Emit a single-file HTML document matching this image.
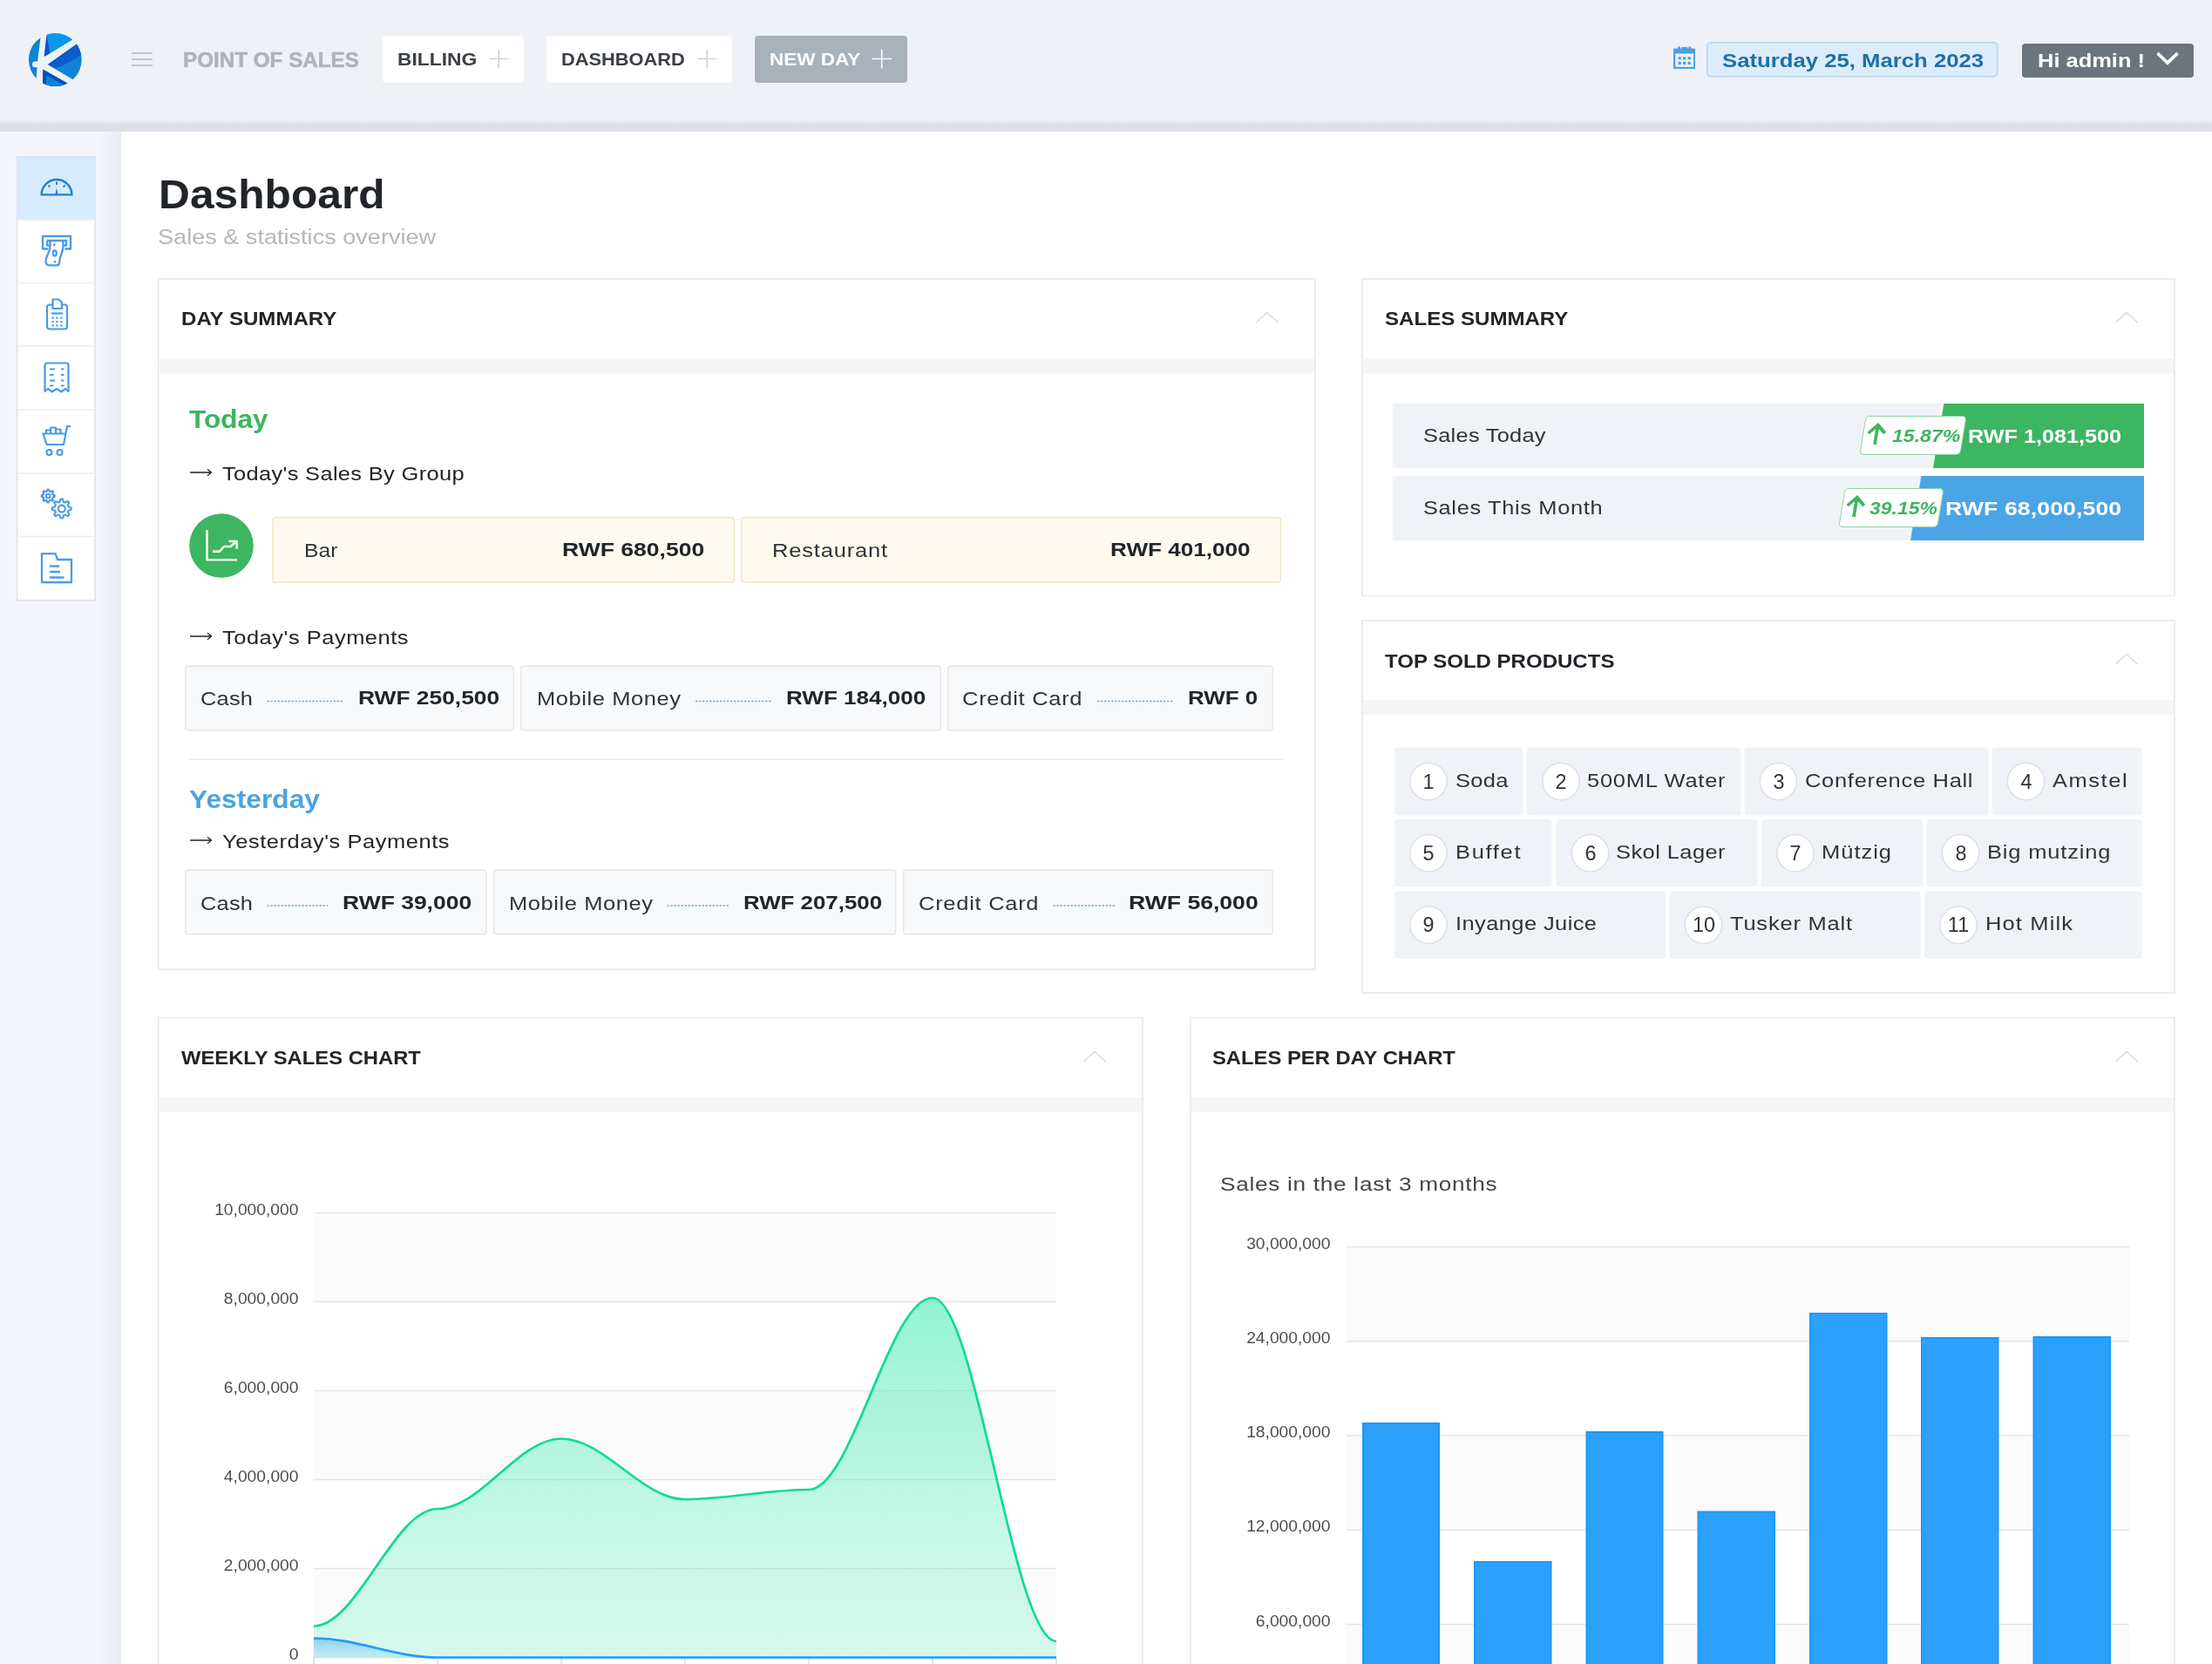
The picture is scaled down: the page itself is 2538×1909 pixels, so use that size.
<!DOCTYPE html><html lang="en"><head><meta charset="utf-8"><title>Dashboard</title><style>html,body{margin:0;padding:0}
body{width:2538px;height:1909px;overflow:hidden;background:#fff;position:relative;font-family:"Liberation Sans", sans-serif}
body>div,body>svg,body>span{position:absolute;display:block}
.t{white-space:nowrap;line-height:1;will-change:transform}
</style></head><body><div style="left:0;top:0;width:2538px;height:142px;background:#eef1f6"></div><div style="left:0;top:137px;width:2538px;height:14px;background:linear-gradient(#eef1f6 0,#e8ebf0 3px,#dcdfe5 5.5px,#dcdfe5 100%)"></div><div style="left:0;top:151px;width:139px;height:1758px;background:linear-gradient(90deg,#f3f5fa 0,#f3f5fa 110px,#e9ecf2 139px)"></div><svg style="left:0;top:0" width="2538" height="1909" viewBox="0 0 2538 1909"><line x1="151" x2="175" y1="61.0" y2="61.0" stroke="#adb3bc" stroke-width="1.4"/><line x1="151" x2="175" y1="68.0" y2="68.0" stroke="#adb3bc" stroke-width="1.4"/><line x1="151" x2="175" y1="75.0" y2="75.0" stroke="#adb3bc" stroke-width="1.4"/><rect x="439.00" y="41.00" width="162.00" height="54.00" rx="4" fill="#fff"/><path d="M561 67.5 H583.5 M572.25 56.5 V78.5" stroke="#ccd0d4" stroke-width="1.6" fill="none"/><rect x="627.00" y="41.00" width="213.00" height="54.00" rx="4" fill="#fff"/><path d="M800 67.5 H822.5 M811.25 56.5 V78.5" stroke="#ccd0d4" stroke-width="1.6" fill="none"/><rect x="866.00" y="41.00" width="175.00" height="54.00" rx="4" fill="#a9b1ba"/><path d="M1000.5 67.5 H1023 M1011.75 56.5 V78.5" stroke="#fff" stroke-width="1.6" fill="none"/><rect x="1958.80" y="48.80" width="332.90" height="38.90" rx="4" fill="#dcecfa" stroke="#b3d6f3" stroke-width="1.6"/><rect x="2320.00" y="50.00" width="197.00" height="39.00" rx="4" fill="#6c757d"/><rect x="19.80" y="179.80" width="89.40" height="508.90" rx="0" fill="#fff" stroke="#e0e3e9" stroke-width="1.6"/><rect x="19.80" y="179.80" width="89.40" height="72.60" rx="0" fill="#d6ebfc"/><rect x="20.60" y="251.60" width="87.80" height="1.60" rx="0" fill="#eceff3"/><rect x="20.60" y="323.70" width="87.80" height="1.60" rx="0" fill="#eceff3"/><rect x="20.60" y="396.20" width="87.80" height="1.60" rx="0" fill="#eceff3"/><rect x="20.60" y="469.20" width="87.80" height="1.60" rx="0" fill="#eceff3"/><rect x="20.60" y="542.20" width="87.80" height="1.60" rx="0" fill="#eceff3"/><rect x="20.60" y="614.70" width="87.80" height="1.60" rx="0" fill="#eceff3"/><rect x="181.70" y="320.00" width="1327.20" height="792.00" rx="0" fill="#fff" stroke="#e6e8ec" stroke-width="1.6"/><rect x="182.50" y="411.20" width="1325.60" height="17.00" rx="0" fill="#f4f5f7"/><rect x="1562.80" y="320.00" width="932.20" height="363.60" rx="0" fill="#fff" stroke="#e6e8ec" stroke-width="1.6"/><rect x="1563.60" y="411.20" width="930.60" height="17.00" rx="0" fill="#f4f5f7"/><rect x="1562.80" y="712.10" width="932.20" height="426.90" rx="0" fill="#fff" stroke="#e6e8ec" stroke-width="1.6"/><rect x="1563.60" y="803.30" width="930.60" height="17.00" rx="0" fill="#f4f5f7"/><rect x="181.70" y="1167.50" width="1129.30" height="781.70" rx="0" fill="#fff" stroke="#e6e8ec" stroke-width="1.6"/><rect x="182.50" y="1258.70" width="1127.70" height="17.00" rx="0" fill="#f4f5f7"/><rect x="1366.10" y="1167.50" width="1128.90" height="781.70" rx="0" fill="#fff" stroke="#e6e8ec" stroke-width="1.6"/><rect x="1366.90" y="1258.70" width="1127.30" height="17.00" rx="0" fill="#f4f5f7"/><rect x="313.00" y="593.70" width="529.30" height="74.30" rx="3" fill="#fefaf0" stroke="#efe6c0" stroke-width="1.4"/><rect x="850.70" y="593.70" width="618.60" height="74.30" rx="3" fill="#fefaf0" stroke="#efe6c0" stroke-width="1.4"/><rect x="212.70" y="764.20" width="376.60" height="73.60" rx="3" fill="#f8f9fb" stroke="#e4e6ea" stroke-width="1.4"/><line x1="306.5" x2="394.5" y1="804.5" y2="804.5" stroke="#62b1d8" stroke-width="1.5" stroke-dasharray="2.4 1.6"/><rect x="597.70" y="764.20" width="481.60" height="73.60" rx="3" fill="#f8f9fb" stroke="#e4e6ea" stroke-width="1.4"/><line x1="798" x2="885" y1="804.5" y2="804.5" stroke="#62b1d8" stroke-width="1.5" stroke-dasharray="2.4 1.6"/><rect x="1087.70" y="764.20" width="372.60" height="73.60" rx="3" fill="#f8f9fb" stroke="#e4e6ea" stroke-width="1.4"/><line x1="1259" x2="1347" y1="804.5" y2="804.5" stroke="#62b1d8" stroke-width="1.5" stroke-dasharray="2.4 1.6"/><rect x="217.00" y="870.40" width="1256.00" height="1.60" rx="0" fill="#e9ebee"/><rect x="212.70" y="998.20" width="345.10" height="73.60" rx="3" fill="#f8f9fb" stroke="#e4e6ea" stroke-width="1.4"/><line x1="306.5" x2="376" y1="1039.0" y2="1039.0" stroke="#62b1d8" stroke-width="1.5" stroke-dasharray="2.4 1.6"/><rect x="566.70" y="998.20" width="461.10" height="73.60" rx="3" fill="#f8f9fb" stroke="#e4e6ea" stroke-width="1.4"/><line x1="765.5" x2="836" y1="1039.0" y2="1039.0" stroke="#62b1d8" stroke-width="1.5" stroke-dasharray="2.4 1.6"/><rect x="1036.70" y="998.20" width="423.60" height="73.60" rx="3" fill="#f8f9fb" stroke="#e4e6ea" stroke-width="1.4"/><line x1="1208.5" x2="1279.5" y1="1039.0" y2="1039.0" stroke="#62b1d8" stroke-width="1.5" stroke-dasharray="2.4 1.6"/><rect x="1598.00" y="463.00" width="862.00" height="74.00" rx="0" fill="#eff3f7"/><rect x="1598.00" y="546.00" width="862.00" height="74.00" rx="0" fill="#eff3f7"/><rect x="1600.00" y="857.50" width="147.50" height="78.00" rx="4" fill="#eff3f7"/><circle cx="1639" cy="896.5" r="21.2" fill="#fff" stroke="#dde1e6" stroke-width="1.6"/><rect x="1752.00" y="857.50" width="245.50" height="78.00" rx="4" fill="#eff3f7"/><circle cx="1791" cy="896.5" r="21.2" fill="#fff" stroke="#dde1e6" stroke-width="1.6"/><rect x="2001.50" y="857.50" width="280.00" height="78.00" rx="4" fill="#eff3f7"/><circle cx="2040.5" cy="896.5" r="21.2" fill="#fff" stroke="#dde1e6" stroke-width="1.6"/><rect x="2285.50" y="857.50" width="172.00" height="78.00" rx="4" fill="#eff3f7"/><circle cx="2324.5" cy="896.5" r="21.2" fill="#fff" stroke="#dde1e6" stroke-width="1.6"/><rect x="1600.00" y="940.00" width="180.50" height="77.50" rx="4" fill="#eff3f7"/><circle cx="1639" cy="978.75" r="21.2" fill="#fff" stroke="#dde1e6" stroke-width="1.6"/><rect x="1785.50" y="940.00" width="231.00" height="77.50" rx="4" fill="#eff3f7"/><circle cx="1824.5" cy="978.75" r="21.2" fill="#fff" stroke="#dde1e6" stroke-width="1.6"/><rect x="2021.00" y="940.00" width="185.50" height="77.50" rx="4" fill="#eff3f7"/><circle cx="2060" cy="978.75" r="21.2" fill="#fff" stroke="#dde1e6" stroke-width="1.6"/><rect x="2210.50" y="940.00" width="247.00" height="77.50" rx="4" fill="#eff3f7"/><circle cx="2249.5" cy="978.75" r="21.2" fill="#fff" stroke="#dde1e6" stroke-width="1.6"/><rect x="1600.00" y="1022.50" width="311.50" height="77.50" rx="4" fill="#eff3f7"/><circle cx="1639" cy="1061.25" r="21.2" fill="#fff" stroke="#dde1e6" stroke-width="1.6"/><rect x="1915.50" y="1022.50" width="288.00" height="77.50" rx="4" fill="#eff3f7"/><circle cx="1954.5" cy="1061.25" r="21.2" fill="#fff" stroke="#dde1e6" stroke-width="1.6"/><rect x="2208.00" y="1022.50" width="249.50" height="77.50" rx="4" fill="#eff3f7"/><circle cx="2247" cy="1061.25" r="21.2" fill="#fff" stroke="#dde1e6" stroke-width="1.6"/></svg><svg style="left:32px;top:37px" width="63" height="63" viewBox="0 0 63 63">
<defs><clipPath id="lc"><circle cx="31.3" cy="31.6" r="30.4"/></clipPath>
<linearGradient id="lg1" x1="0" y1="0" x2="1" y2="1"><stop offset="0" stop-color="#0a4cc4"/><stop offset="1" stop-color="#0b68d2"/></linearGradient></defs>
<g clip-path="url(#lc)">
<rect width="63" height="63" fill="#0d84d8"/>
<path d="M18 0 H56 L60 3.2 L19.9 27.5 Z" fill="#0a97e8"/>
<path d="M21.8 4 L25.5 24.5 L18 30 L20 10 Z" fill="#0a55cc"/>
<path d="M22.6 36.9 L60 10.5 L63 14 L63 24.5 C54 31.5 43 37.5 31.8 41.3 Z" fill="url(#lg1)"/>
<path d="M17.5 42.6 L52 62.1 L40 66 L12 66 Z" fill="#0a4ec4"/>
<path d="M21.5 49.5 L20.3 64 L44 64 L42 61.1 Z" fill="#0d82d6"/>
</g>
<path d="M15.3 0 L14.9 3 L11.3 31.7 L9.2 58 L8.9 63 L16.9 64 L16.9 60 L17.1 42.5 L18.2 30.5 L21.5 2 L21.8 -1 Z" fill="#eef1f6"/>
<path d="M19.9 27.5 L60 3.2 L60 10.5 L22.6 36.9 L58 58 L52 62.1 L17.5 42.6 L13.5 43 L14.5 28 Z" fill="#eef1f6"/>
<path d="M8.3 36.8 H16" stroke="#eef1f6" stroke-width="6.8" stroke-linecap="round" fill="none"/>
</svg><span class="t" id="t0" style="top:57.53px;font-size:23px;font-weight:700;color:#adb3bb;letter-spacing:0.000px;left:209.79px;transform:scaleX(1.0534);transform-origin:0 0;-webkit-text-stroke:0.5px #adb3bb;">POINT OF SALES</span><span class="t" id="t1" style="top:57.76px;font-size:20.6px;font-weight:700;color:#3b4046;letter-spacing:0.000px;left:455.86px;transform:scaleX(1.1081);transform-origin:0 0;">BILLING</span><span class="t" id="t2" style="top:57.76px;font-size:20.6px;font-weight:700;color:#3b4046;letter-spacing:0.000px;left:643.91px;transform:scaleX(1.0584);transform-origin:0 0;">DASHBOARD</span><span class="t" id="t3" style="top:57.76px;font-size:20.6px;font-weight:700;color:#fff;letter-spacing:0.000px;left:882.87px;transform:scaleX(1.0933);transform-origin:0 0;">NEW DAY</span><svg style="left:1919.5px;top:53px" width="25.4" height="26.3" viewBox="0 0 27 28">
<rect x="1.2" y="4" width="24.6" height="22.6" fill="none" stroke="#4a9fe3" stroke-width="2.4"/>
<rect x="1.2" y="4" width="24.6" height="5" fill="#4a9fe3"/>
<rect x="5.5" y="0.5" width="3" height="6" fill="#4a9fe3"/><rect x="18.5" y="0.5" width="3" height="6" fill="#4a9fe3"/>
<rect x="10" y="1" width="7" height="2.4" fill="#4a9fe3"/>
<g fill="#4a9fe3"><rect x="6" y="13" width="3.4" height="3.4"/><rect x="11.8" y="13" width="3.4" height="3.4"/><rect x="17.6" y="13" width="3.4" height="3.4"/>
<rect x="6" y="19" width="3.4" height="3.4"/><rect x="11.8" y="19" width="3.4" height="3.4"/><rect x="17.6" y="19" width="3.4" height="3.4"/></g>
</svg><span class="t" id="t4" style="top:57.82px;font-size:22.9px;font-weight:700;color:#1f6fa8;letter-spacing:0.000px;left:1975.71px;transform:scaleX(1.1230);transform-origin:0 0;">Saturday 25, March 2023</span><span class="t" id="t5" style="top:58.81px;font-size:22.2px;font-weight:700;color:#fff;letter-spacing:0.000px;left:2337.73px;transform:scaleX(1.1473);transform-origin:0 0;">Hi admin !</span><svg style="left:2472px;top:57px" width="30" height="20" viewBox="0 0 30 20"><path d="M3.5 4 L15 15 L26.5 4" fill="none" stroke="#fff" stroke-width="3.8"/></svg><svg style="left:45px;top:201px" width="40" height="25" viewBox="0 0 40 25">
<path d="M2.6 22.4 A17.4 17.4 0 0 1 37.4 22.4 Z" fill="none" stroke="#2180d3" stroke-width="2.4" stroke-linejoin="round"/>
<path d="M18.4 22 L20 14.5 L21.6 22 Z" fill="#2180d3"/>
<path d="M20 7.5 V11 M10.5 11.5 L12.3 13.6 M29.5 11.5 L27.7 13.6" stroke="#2180d3" stroke-width="2" fill="none"/>
</svg><svg style="left:46px;top:268px" width="38" height="39" viewBox="0 0 38 39">
<g fill="none" stroke="#4a9be6" stroke-width="2.3" stroke-linejoin="round">
<path d="M9 17.5 H3 V3 H35 V17.5 H28.5"/>
<path d="M8 8 H30 V13.5 H27 M11 13.5 H8 V8"/>
<path d="M11.5 8.5 V14 C11.5 22 6.5 25 6.5 32 C6.5 35 8 36.3 10.5 36.3 H19 C21.5 36.3 22.2 35 22.2 32.5 C22.2 25 26.5 22 26.5 14 V8.5"/>
<ellipse cx="16.8" cy="22.5" rx="2" ry="3"/>
<path d="M16.3 11.5 V14 M17 31 V33.5"/>
</g></svg><svg style="left:52px;top:341px" width="27" height="39" viewBox="0 0 27 39">
<g fill="none" stroke="#4a9be6" stroke-width="2.2" stroke-linejoin="round">
<path d="M8.5 8.5 H5 C3.2 8.5 2 9.7 2 11.5 V33.5 C2 35.3 3.2 36.5 5 36.5 H22 C23.8 36.5 25 35.3 25 33.5 V11.5 C25 9.7 23.8 8.5 22 8.5 H19"/>
<path d="M8.5 13 V2.5 H15.5 L19 6 V13 Z"/>
<path d="M7 18.5 H20"/>
</g>
<g fill="#4a9be6"><rect x="7.5" y="22.6" width="2.2" height="2.2"/><rect x="12.4" y="22.6" width="2.2" height="2.2"/><rect x="17.3" y="22.6" width="2.2" height="2.2"/>
<rect x="7.5" y="27" width="2.2" height="2.2"/><rect x="12.4" y="27" width="2.2" height="2.2"/><rect x="17.3" y="27" width="2.2" height="2.2"/>
<rect x="7.5" y="31.4" width="2.2" height="2.2"/><rect x="12.4" y="31.4" width="2.2" height="2.2"/><rect x="17.3" y="31.4" width="2.2" height="2.2"/></g>
</svg><svg style="left:49px;top:414px" width="32" height="39" viewBox="0 0 32 39">
<g fill="none" stroke="#4a9be6" stroke-width="2.2" stroke-linejoin="round">
<path d="M2.5 35 V5 C2.5 3.5 3.5 2.5 5 2.5 H27 C28.5 2.5 29.5 3.5 29.5 5 V35 L26 32 L21.3 35.5 L16 32 L10.7 35.5 L6 32 Z"/>
<path d="M8 9.5 H14 M21 9.5 H24.5 M8 16 H12.5 M21 16 H24.5 M8 22.5 H14 M21 22.5 H24.5 M8 28.5 H12.5 M21 28.5 H24.5"/>
</g></svg><svg style="left:47px;top:486px" width="36" height="39" viewBox="0 0 36 39">
<g fill="none" stroke="#4a9be6" stroke-width="2.2" stroke-linejoin="round">
<path d="M34 3 H30 L26 24 H6.5 L2.5 11.5 H28"/>
<path d="M6 11 V7.5 H11 V11 M11 11 V4.5 H17 V11 M17 11 V6.5 H22.5 V11"/>
<circle cx="9.5" cy="33" r="3"/><circle cx="21.5" cy="33" r="3"/>
</g></svg><svg style="left:45px;top:559px" width="40" height="39" viewBox="0 0 40 39">
<g fill="none" stroke="#4a9be6" stroke-width="2.1" stroke-linejoin="round">
<path d="M17.75 9.17 L17.75 10.83 L15.48 11.53 L15.02 12.65 L16.13 14.75 L14.95 15.93 L12.85 14.82 L11.73 15.28 L11.03 17.55 L9.37 17.55 L8.67 15.28 L7.55 14.82 L5.45 15.93 L4.27 14.75 L5.38 12.65 L4.92 11.53 L2.65 10.83 L2.65 9.17 L4.92 8.47 L5.38 7.35 L4.27 5.25 L5.45 4.07 L7.55 5.18 L8.67 4.72 L9.37 2.45 L11.03 2.45 L11.73 4.72 L12.85 5.18 L14.95 4.07 L16.13 5.25 L15.02 7.35 L15.48 8.47 Z"/><circle cx="10.2" cy="10" r="2.3"/>
<path d="M36.73 23.39 L36.73 25.81 L33.48 26.83 L32.81 28.45 L34.38 31.48 L32.68 33.18 L29.65 31.61 L28.03 32.28 L27.01 35.53 L24.59 35.53 L23.57 32.28 L21.95 31.61 L18.92 33.18 L17.22 31.48 L18.79 28.45 L18.12 26.83 L14.87 25.81 L14.87 23.39 L18.12 22.37 L18.79 20.75 L17.22 17.72 L18.92 16.02 L21.95 17.59 L23.57 16.92 L24.59 13.67 L27.01 13.67 L28.03 16.92 L29.65 17.59 L32.68 16.02 L34.38 17.72 L32.81 20.75 L33.48 22.37 Z"/><circle cx="25.8" cy="24.6" r="4"/>
</g></svg><svg style="left:45px;top:632px" width="40" height="39" viewBox="0 0 40 39">
<g fill="none" stroke="#4a9be6" stroke-width="2.3" stroke-linejoin="round">
<path d="M3 36 V3.2 H18.5 L21 10 H37 V36 Z"/>
<path d="M12 17.5 H23 M12 24 H24 M12 30.5 H28.5"/>
</g></svg><span class="t" id="t6" style="top:200.57px;font-size:45.4px;font-weight:700;color:#212529;letter-spacing:0.000px;left:181.81px;transform:scaleX(1.0952);transform-origin:0 0;">Dashboard</span><span class="t" id="t7" style="top:259.58px;font-size:24.6px;font-weight:400;color:#b2b7be;letter-spacing:0.000px;left:181.25px;transform:scaleX(1.1013);transform-origin:0 0;">Sales &amp; statistics overview</span><span class="t" id="t8" style="top:355.45px;font-size:22.5px;font-weight:700;color:#212529;letter-spacing:0.000px;left:208.30px;transform:scaleX(1.0702);transform-origin:0 0;">DAY SUMMARY</span><svg style="left:1439.7px;top:356.2px" width="28" height="16" viewBox="0 0 28 16"><path d="M1.5 14 L14 2.5 L26.5 14" fill="none" stroke="#d9dcdf" stroke-width="1.6"/></svg><span class="t" id="t9" style="top:355.45px;font-size:22.5px;font-weight:700;color:#212529;letter-spacing:0.000px;left:1589.30px;transform:scaleX(1.0698);transform-origin:0 0;">SALES SUMMARY</span><svg style="left:2425.8px;top:356.2px" width="28" height="16" viewBox="0 0 28 16"><path d="M1.5 14 L14 2.5 L26.5 14" fill="none" stroke="#d9dcdf" stroke-width="1.6"/></svg><span class="t" id="t10" style="top:747.55px;font-size:22.5px;font-weight:700;color:#212529;letter-spacing:0.000px;left:1589.30px;transform:scaleX(1.0677);transform-origin:0 0;">TOP SOLD PRODUCTS</span><svg style="left:2425.8px;top:748.3px" width="28" height="16" viewBox="0 0 28 16"><path d="M1.5 14 L14 2.5 L26.5 14" fill="none" stroke="#d9dcdf" stroke-width="1.6"/></svg><span class="t" id="t11" style="top:1202.95px;font-size:22.5px;font-weight:700;color:#212529;letter-spacing:0.000px;left:208.31px;transform:scaleX(1.0570);transform-origin:0 0;">WEEKLY SALES CHART</span><svg style="left:1241.8px;top:1203.7px" width="28" height="16" viewBox="0 0 28 16"><path d="M1.5 14 L14 2.5 L26.5 14" fill="none" stroke="#d9dcdf" stroke-width="1.6"/></svg><span class="t" id="t12" style="top:1202.95px;font-size:22.5px;font-weight:700;color:#212529;letter-spacing:0.000px;left:1391.31px;transform:scaleX(1.0571);transform-origin:0 0;">SALES PER DAY CHART</span><svg style="left:2425.8px;top:1203.7px" width="28" height="16" viewBox="0 0 28 16"><path d="M1.5 14 L14 2.5 L26.5 14" fill="none" stroke="#d9dcdf" stroke-width="1.6"/></svg><span class="t" id="t13" style="top:466.62px;font-size:28.8px;font-weight:700;color:#3cb55f;letter-spacing:0.000px;left:216.62px;transform:scaleX(1.0941);transform-origin:0 0;">Today</span><svg style="left:217.5px;top:535.6px" width="26.0" height="12" viewBox="0 0 26.0 12"><path d="M0 6 H24.5 M20.0 2.3 L24.5 6 L20.0 9.7" fill="none" stroke="#212529" stroke-width="1.3"/></svg><span class="t" id="t14" style="top:532.72px;font-size:21.6px;font-weight:400;color:#212529;letter-spacing:0.259px;left:255.23px;transform:scaleX(1.1800);transform-origin:0 0;">Today's Sales By Group</span><svg style="left:217px;top:589px" width="74" height="74" viewBox="0 0 74 74">
<circle cx="37" cy="37" r="36.8" fill="#3cb661"/>
<path d="M20.5 19 V53.2 H55" fill="none" stroke="#fffbea" stroke-width="2.6" stroke-linejoin="round"/>
<path d="M27 43.6 H35 L40 38 H47.5 L54 32.5" fill="none" stroke="#fffbea" stroke-width="2.6" stroke-linejoin="round"/>
<path d="M45.5 32 H54.6 V40.5" fill="none" stroke="#fffbea" stroke-width="2.6"/>
</svg><span class="t" id="t15" style="top:620.92px;font-size:21.6px;font-weight:400;color:#2f3439;letter-spacing:0.000px;left:349.26px;transform:scaleX(1.1447);transform-origin:0 0;">Bar</span><span class="t" id="t16" style="top:620.27px;font-size:22.6px;font-weight:700;color:#212529;letter-spacing:0.000px;left:644.67px;transform:scaleX(1.1739);transform-origin:0 0;">RWF 680,500</span><span class="t" id="t17" style="top:620.92px;font-size:21.6px;font-weight:400;color:#2f3439;letter-spacing:0.696px;left:885.73px;transform:scaleX(1.1800);transform-origin:0 0;">Restaurant</span><span class="t" id="t18" style="top:620.27px;font-size:22.6px;font-weight:700;color:#212529;letter-spacing:0.000px;left:1274.19px;transform:scaleX(1.1556);transform-origin:0 0;">RWF 401,000</span><svg style="left:217.5px;top:723.8px" width="26.0" height="12" viewBox="0 0 26.0 12"><path d="M0 6 H24.5 M20.0 2.3 L24.5 6 L20.0 9.7" fill="none" stroke="#212529" stroke-width="1.3"/></svg><span class="t" id="t19" style="top:720.92px;font-size:21.6px;font-weight:400;color:#212529;letter-spacing:0.427px;left:255.23px;transform:scaleX(1.1800);transform-origin:0 0;">Today's Payments</span><span class="t" id="t20" style="top:791.12px;font-size:21.6px;font-weight:400;color:#2f3439;letter-spacing:0.156px;left:229.73px;transform:scaleX(1.1800);transform-origin:0 0;">Cash</span><span class="t" id="t21" style="top:790.47px;font-size:22.6px;font-weight:700;color:#212529;letter-spacing:0.000px;left:410.68px;transform:scaleX(1.1666);transform-origin:0 0;">RWF 250,500</span><span class="t" id="t22" style="top:791.12px;font-size:21.6px;font-weight:400;color:#2f3439;letter-spacing:0.494px;left:615.73px;transform:scaleX(1.1800);transform-origin:0 0;">Mobile Money</span><span class="t" id="t23" style="top:790.47px;font-size:22.6px;font-weight:700;color:#212529;letter-spacing:0.000px;left:901.70px;transform:scaleX(1.1520);transform-origin:0 0;">RWF 184,000</span><span class="t" id="t24" style="top:791.12px;font-size:21.6px;font-weight:400;color:#2f3439;letter-spacing:0.616px;left:1104.23px;transform:scaleX(1.1800);transform-origin:0 0;">Credit Card</span><span class="t" id="t25" style="top:790.47px;font-size:22.6px;font-weight:700;color:#212529;letter-spacing:0.000px;left:1363.21px;transform:scaleX(1.1459);transform-origin:0 0;">RWF 0</span><span class="t" id="t26" style="top:903.22px;font-size:28.8px;font-weight:700;color:#4aa3e3;letter-spacing:0.000px;left:216.61px;transform:scaleX(1.1020);transform-origin:0 0;">Yesterday</span><svg style="left:217.5px;top:957.8px" width="26.0" height="12" viewBox="0 0 26.0 12"><path d="M0 6 H24.5 M20.0 2.3 L24.5 6 L20.0 9.7" fill="none" stroke="#212529" stroke-width="1.3"/></svg><span class="t" id="t27" style="top:954.92px;font-size:21.6px;font-weight:400;color:#212529;letter-spacing:0.454px;left:255.23px;transform:scaleX(1.1800);transform-origin:0 0;">Yesterday's Payments</span><span class="t" id="t28" style="top:1025.62px;font-size:21.6px;font-weight:400;color:#2f3439;letter-spacing:0.156px;left:229.73px;transform:scaleX(1.1800);transform-origin:0 0;">Cash</span><span class="t" id="t29" style="top:1024.97px;font-size:22.6px;font-weight:700;color:#212529;letter-spacing:0.000px;left:393.18px;transform:scaleX(1.1719);transform-origin:0 0;">RWF 39,000</span><span class="t" id="t30" style="top:1025.62px;font-size:21.6px;font-weight:400;color:#2f3439;letter-spacing:0.494px;left:584.23px;transform:scaleX(1.1800);transform-origin:0 0;">Mobile Money</span><span class="t" id="t31" style="top:1024.97px;font-size:22.6px;font-weight:700;color:#212529;letter-spacing:0.000px;left:852.71px;transform:scaleX(1.1446);transform-origin:0 0;">RWF 207,500</span><span class="t" id="t32" style="top:1025.62px;font-size:21.6px;font-weight:400;color:#2f3439;letter-spacing:0.616px;left:1054.23px;transform:scaleX(1.1800);transform-origin:0 0;">Credit Card</span><span class="t" id="t33" style="top:1024.97px;font-size:22.6px;font-weight:700;color:#212529;letter-spacing:0.000px;left:1295.17px;transform:scaleX(1.1759);transform-origin:0 0;">RWF 56,000</span><svg style="left:2216.6px;top:463px" width="243.4000000000001" height="74" viewBox="0 0 243.4000000000001 74"><path d="M13.400000000000091 0 H243.4000000000001 V74 H1 Z" fill="#3cb661"/></svg><span class="t" id="t34" style="top:490.40px;font-size:21.5px;font-weight:400;color:#2f3439;letter-spacing:0.235px;left:1632.73px;transform:scaleX(1.1800);transform-origin:0 0;">Sales Today</span><div style="left:2137.1px;top:477.2px;width:115.6px;height:44.50000000000006px;background:#fff;border:1.5px solid #8fd3a3;border-radius:5px;box-sizing:border-box;transform:skewX(-9.3deg)"></div><svg style="left:2141px;top:485px;transform:skewX(-9.3deg)" width="24" height="26" viewBox="0 0 24 26"><path d="M12 25 V3 M2.5 12 L12 2.6 L21.5 12" fill="none" stroke="#3cb55f" stroke-width="3.7" stroke-linejoin="miter"/></svg><span class="t" id="t35" style="top:489.79px;font-size:20.8px;font-weight:700;color:#3cb55f;letter-spacing:0.000px;font-style:italic;left:2170.85px;transform:scaleX(1.1100);transform-origin:0 0;">15.87%</span><span class="t" id="t36" style="top:489.87px;font-size:22.6px;font-weight:700;color:#fff;letter-spacing:-0.000px;left:2258.24px;transform:scaleX(1.1153);transform-origin:0 0;">RWF 1,081,500</span><svg style="left:2190.6px;top:546px" width="269.4000000000001" height="74" viewBox="0 0 269.4000000000001 74"><path d="M13.400000000000091 0 H269.4000000000001 V74 H1 Z" fill="#4aa5e6"/></svg><span class="t" id="t37" style="top:573.40px;font-size:21.5px;font-weight:400;color:#2f3439;letter-spacing:0.564px;left:1632.73px;transform:scaleX(1.1800);transform-origin:0 0;">Sales This Month</span><div style="left:2112.6px;top:560.2px;width:114.1px;height:44.5px;background:#fff;border:1.5px solid #8fd3a3;border-radius:5px;box-sizing:border-box;transform:skewX(-9.3deg)"></div><svg style="left:2116.5px;top:568px;transform:skewX(-9.3deg)" width="24" height="26" viewBox="0 0 24 26"><path d="M12 25 V3 M2.5 12 L12 2.6 L21.5 12" fill="none" stroke="#3cb55f" stroke-width="3.7" stroke-linejoin="miter"/></svg><span class="t" id="t38" style="top:572.79px;font-size:20.8px;font-weight:700;color:#3cb55f;letter-spacing:0.000px;font-style:italic;left:2144.85px;transform:scaleX(1.1027);transform-origin:0 0;">39.15%</span><span class="t" id="t39" style="top:572.87px;font-size:22.6px;font-weight:700;color:#fff;letter-spacing:0.071px;left:2232.17px;transform:scaleX(1.1800);transform-origin:0 0;">RWF 68,000,500</span><span class="t" id="t40" style="top:885.79px;font-size:23.4px;font-weight:400;color:#2f3439;letter-spacing:0.000px;left:1439.00px;width:400px;text-align:center;">1</span><span class="t" id="t41" style="top:885.02px;font-size:21.6px;font-weight:400;color:#2f3439;letter-spacing:0.292px;left:1669.73px;transform:scaleX(1.1800);transform-origin:0 0;">Soda</span><span class="t" id="t42" style="top:885.79px;font-size:23.4px;font-weight:400;color:#2f3439;letter-spacing:0.000px;left:1591.00px;width:400px;text-align:center;">2</span><span class="t" id="t43" style="top:885.02px;font-size:21.6px;font-weight:400;color:#2f3439;letter-spacing:0.635px;left:1821.23px;transform:scaleX(1.1800);transform-origin:0 0;">500ML Water</span><span class="t" id="t44" style="top:885.79px;font-size:23.4px;font-weight:400;color:#2f3439;letter-spacing:0.000px;left:1840.50px;width:400px;text-align:center;">3</span><span class="t" id="t45" style="top:885.02px;font-size:21.6px;font-weight:400;color:#2f3439;letter-spacing:0.595px;left:2071.23px;transform:scaleX(1.1800);transform-origin:0 0;">Conference Hall</span><span class="t" id="t46" style="top:885.79px;font-size:23.4px;font-weight:400;color:#2f3439;letter-spacing:0.000px;left:2124.50px;width:400px;text-align:center;">4</span><span class="t" id="t47" style="top:885.02px;font-size:21.6px;font-weight:400;color:#2f3439;letter-spacing:1.300px;left:2354.73px;transform:scaleX(1.1800);transform-origin:0 0;">Amstel</span><span class="t" id="t48" style="top:967.79px;font-size:23.4px;font-weight:400;color:#2f3439;letter-spacing:0.000px;left:1439.00px;width:400px;text-align:center;">5</span><span class="t" id="t49" style="top:967.02px;font-size:21.6px;font-weight:400;color:#2f3439;letter-spacing:1.429px;left:1669.73px;transform:scaleX(1.1800);transform-origin:0 0;">Buffet</span><span class="t" id="t50" style="top:967.79px;font-size:23.4px;font-weight:400;color:#2f3439;letter-spacing:0.000px;left:1624.50px;width:400px;text-align:center;">6</span><span class="t" id="t51" style="top:967.02px;font-size:21.6px;font-weight:400;color:#2f3439;letter-spacing:0.350px;left:1854.23px;transform:scaleX(1.1800);transform-origin:0 0;">Skol Lager</span><span class="t" id="t52" style="top:967.79px;font-size:23.4px;font-weight:400;color:#2f3439;letter-spacing:0.000px;left:1860.00px;width:400px;text-align:center;">7</span><span class="t" id="t53" style="top:967.02px;font-size:21.6px;font-weight:400;color:#2f3439;letter-spacing:0.846px;left:2090.23px;transform:scaleX(1.1800);transform-origin:0 0;">Mützig</span><span class="t" id="t54" style="top:967.79px;font-size:23.4px;font-weight:400;color:#2f3439;letter-spacing:0.000px;left:2049.50px;width:400px;text-align:center;">8</span><span class="t" id="t55" style="top:967.02px;font-size:21.6px;font-weight:400;color:#2f3439;letter-spacing:0.713px;left:2280.23px;transform:scaleX(1.1800);transform-origin:0 0;">Big mutzing</span><span class="t" id="t56" style="top:1049.79px;font-size:23.4px;font-weight:400;color:#2f3439;letter-spacing:0.000px;left:1439.00px;width:400px;text-align:center;">9</span><span class="t" id="t57" style="top:1049.02px;font-size:21.6px;font-weight:400;color:#2f3439;letter-spacing:0.339px;left:1669.73px;transform:scaleX(1.1800);transform-origin:0 0;">Inyange Juice</span><span class="t" id="t58" style="top:1049.79px;font-size:23.4px;font-weight:400;color:#2f3439;letter-spacing:0.000px;left:1754.50px;width:400px;text-align:center;">10</span><span class="t" id="t59" style="top:1049.02px;font-size:21.6px;font-weight:400;color:#2f3439;letter-spacing:0.669px;left:1984.73px;transform:scaleX(1.1800);transform-origin:0 0;">Tusker Malt</span><span class="t" id="t60" style="top:1049.79px;font-size:23.4px;font-weight:400;color:#2f3439;letter-spacing:0.000px;left:2047.00px;width:400px;text-align:center;">11</span><span class="t" id="t61" style="top:1049.02px;font-size:21.6px;font-weight:400;color:#2f3439;letter-spacing:0.972px;left:2277.73px;transform:scaleX(1.1800);transform-origin:0 0;">Hot Milk</span><svg style="left:0;top:0" width="2538" height="1909" viewBox="0 0 2538 1909"><defs><linearGradient id="gg" x1="0" y1="0" x2="0" y2="1"><stop offset="0" stop-color="#00e396" stop-opacity="0.42"/><stop offset="1" stop-color="#7df0c8" stop-opacity="0.28"/></linearGradient><linearGradient id="gb" x1="0" y1="0" x2="0" y2="1"><stop offset="0" stop-color="#2a9df4" stop-opacity="0.42"/><stop offset="1" stop-color="#8fd0f5" stop-opacity="0.3"/></linearGradient></defs><rect x="360" y="1391.5" width="852" height="102" fill="#f3f3f5" fill-opacity="0.3"/><rect x="360" y="1595.5" width="852" height="102" fill="#f3f3f5" fill-opacity="0.3"/><rect x="360" y="1799.5" width="852" height="102" fill="#f3f3f5" fill-opacity="0.3"/><line x1="360" x2="1212" y1="1391.5" y2="1391.5" stroke="#e5e6e9" stroke-width="1.6"/><line x1="360" x2="1212" y1="1493.5" y2="1493.5" stroke="#e5e6e9" stroke-width="1.6"/><line x1="360" x2="1212" y1="1595.5" y2="1595.5" stroke="#e5e6e9" stroke-width="1.6"/><line x1="360" x2="1212" y1="1697.5" y2="1697.5" stroke="#e5e6e9" stroke-width="1.6"/><line x1="360" x2="1212" y1="1799.5" y2="1799.5" stroke="#e5e6e9" stroke-width="1.6"/><line x1="360" x2="1212" y1="1901.5" y2="1901.5" stroke="#e5e6e9" stroke-width="1.6"/><line x1="360" x2="360" y1="1901.5" y2="1912" stroke="#e0e0e0" stroke-width="1.75"/><line x1="502" x2="502" y1="1901.5" y2="1912" stroke="#e0e0e0" stroke-width="1.75"/><line x1="644" x2="644" y1="1901.5" y2="1912" stroke="#e0e0e0" stroke-width="1.75"/><line x1="786" x2="786" y1="1901.5" y2="1912" stroke="#e0e0e0" stroke-width="1.75"/><line x1="928" x2="928" y1="1901.5" y2="1912" stroke="#e0e0e0" stroke-width="1.75"/><line x1="1070" x2="1070" y1="1901.5" y2="1912" stroke="#e0e0e0" stroke-width="1.75"/><line x1="1212" x2="1212" y1="1901.5" y2="1912" stroke="#e0e0e0" stroke-width="1.75"/><path d="M360 1865.5 C409.7 1865.5 452.3 1731 502 1731 C551.7 1731 594.3 1650.5 644 1650.5 C693.7 1650.5 736.3 1720 786 1720 C835.7 1720 878.3 1709 928 1709 C977.7 1709 1020.3 1489 1070 1489 C1119.7 1489 1162.3 1883 1212 1883 V1901.5 H360 Z" fill="url(#gg)"/><path d="M360 1879.5 C409.7 1879.5 452.3 1901.5 502 1901.5 C551.7 1901.5 594.3 1901.5 644 1901.5 C693.7 1901.5 736.3 1901.5 786 1901.5 C835.7 1901.5 878.3 1901.5 928 1901.5 C977.7 1901.5 1020.3 1901.5 1070 1901.5 C1119.7 1901.5 1162.3 1901.5 1212 1901.5 V1901.5 H360 Z" fill="url(#gb)"/><path d="M360 1865.5 C409.7 1865.5 452.3 1731 502 1731 C551.7 1731 594.3 1650.5 644 1650.5 C693.7 1650.5 736.3 1720 786 1720 C835.7 1720 878.3 1709 928 1709 C977.7 1709 1020.3 1489 1070 1489 C1119.7 1489 1162.3 1883 1212 1883" fill="none" stroke="#0bdc90" stroke-width="2.7" stroke-linecap="butt"/><path d="M360 1879.5 C409.7 1879.5 452.3 1901.5 502 1901.5 C551.7 1901.5 594.3 1901.5 644 1901.5 C693.7 1901.5 736.3 1901.5 786 1901.5 C835.7 1901.5 878.3 1901.5 928 1901.5 C977.7 1901.5 1020.3 1901.5 1070 1901.5 C1119.7 1901.5 1162.3 1901.5 1212 1901.5" fill="none" stroke="#1f9cfb" stroke-width="2.7" stroke-linecap="butt"/><text x="342.5" y="1393.7" text-anchor="end" font-family='"Liberation Sans", sans-serif' font-size="19.25" fill="#4a4f52">10,000,000</text><text x="342.5" y="1495.7" text-anchor="end" font-family='"Liberation Sans", sans-serif' font-size="19.25" fill="#4a4f52">8,000,000</text><text x="342.5" y="1597.7" text-anchor="end" font-family='"Liberation Sans", sans-serif' font-size="19.25" fill="#4a4f52">6,000,000</text><text x="342.5" y="1699.7" text-anchor="end" font-family='"Liberation Sans", sans-serif' font-size="19.25" fill="#4a4f52">4,000,000</text><text x="342.5" y="1801.7" text-anchor="end" font-family='"Liberation Sans", sans-serif' font-size="19.25" fill="#4a4f52">2,000,000</text><text x="342.5" y="1903.7" text-anchor="end" font-family='"Liberation Sans", sans-serif' font-size="19.25" fill="#4a4f52">0</text></svg><svg style="left:0;top:0" width="2538" height="1909" viewBox="0 0 2538 1909"><rect x="1545" y="1430.5" width="898" height="108.25" fill="#f3f3f5" fill-opacity="0.3"/><rect x="1545" y="1647.0" width="898" height="108.25" fill="#f3f3f5" fill-opacity="0.3"/><rect x="1545" y="1863.5" width="898" height="108.25" fill="#f3f3f5" fill-opacity="0.3"/><line x1="1545" x2="2443" y1="1430.5" y2="1430.5" stroke="#e5e6e9" stroke-width="1.6"/><line x1="1545" x2="2443" y1="1538.75" y2="1538.75" stroke="#e5e6e9" stroke-width="1.6"/><line x1="1545" x2="2443" y1="1647.0" y2="1647.0" stroke="#e5e6e9" stroke-width="1.6"/><line x1="1545" x2="2443" y1="1755.25" y2="1755.25" stroke="#e5e6e9" stroke-width="1.6"/><line x1="1545" x2="2443" y1="1863.5" y2="1863.5" stroke="#e5e6e9" stroke-width="1.6"/><rect x="1563.8" y="1632.8" width="87.4" height="500" fill="#2ba1fc" stroke="#1a95f6" stroke-width="1.6"/><rect x="1691.8" y="1791.8" width="87.9" height="500" fill="#2ba1fc" stroke="#1a95f6" stroke-width="1.6"/><rect x="1820.3" y="1642.8" width="87.4" height="500" fill="#2ba1fc" stroke="#1a95f6" stroke-width="1.6"/><rect x="1948.3" y="1734.3" width="87.9" height="500" fill="#2ba1fc" stroke="#1a95f6" stroke-width="1.6"/><rect x="2076.8" y="1506.8" width="87.9" height="500" fill="#2ba1fc" stroke="#1a95f6" stroke-width="1.6"/><rect x="2204.8" y="1534.8" width="87.9" height="500" fill="#2ba1fc" stroke="#1a95f6" stroke-width="1.6"/><rect x="2333.3" y="1533.8" width="87.9" height="500" fill="#2ba1fc" stroke="#1a95f6" stroke-width="1.6"/><text x="1526.5" y="1432.7" text-anchor="end" font-family='"Liberation Sans", sans-serif' font-size="19.25" fill="#4a4f52">30,000,000</text><text x="1526.5" y="1540.95" text-anchor="end" font-family='"Liberation Sans", sans-serif' font-size="19.25" fill="#4a4f52">24,000,000</text><text x="1526.5" y="1649.2" text-anchor="end" font-family='"Liberation Sans", sans-serif' font-size="19.25" fill="#4a4f52">18,000,000</text><text x="1526.5" y="1757.45" text-anchor="end" font-family='"Liberation Sans", sans-serif' font-size="19.25" fill="#4a4f52">12,000,000</text><text x="1526.5" y="1865.7" text-anchor="end" font-family='"Liberation Sans", sans-serif' font-size="19.25" fill="#4a4f52">6,000,000</text></svg><span class="t" id="t62" style="top:1348.21px;font-size:22.2px;font-weight:400;color:#41474a;letter-spacing:0.604px;left:1400.19px;transform:scaleX(1.1800);transform-origin:0 0;">Sales in the last 3 months</span></body></html>
